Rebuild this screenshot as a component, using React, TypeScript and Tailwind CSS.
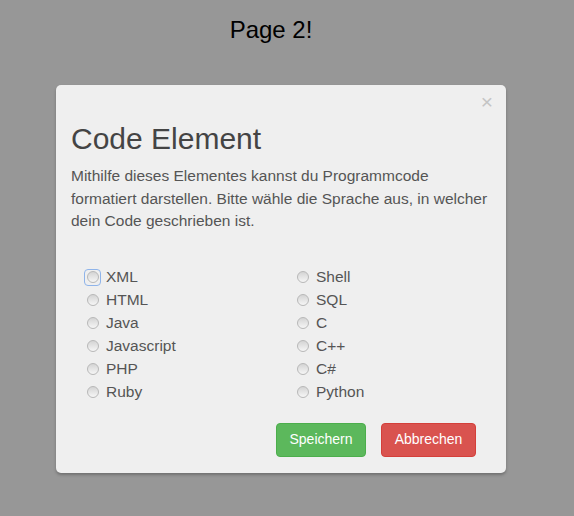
const languages = [
  ['XML', 'Shell'],
  ['HTML', 'SQL'],
  ['Java', 'C'],
  ['Javascript', 'C++'],
  ['PHP', 'C#'],
  ['Ruby', 'Python'],
]

function Radio({ label, focused }: { label: string; focused?: boolean }) {
  return (
    <label className="flex h-[23px] items-center">
      <span
        className={
          focused
            ? 'flex h-[15px] w-[15px] items-center justify-center rounded-[3px] outline outline-[1.5px] outline-[#8fb4ea]'
            : 'flex h-[15px] w-[15px] items-center justify-center'
        }
      >
        <span className="h-[12px] w-[12px] rounded-full border border-[#b8b8b8] bg-gradient-to-b from-[#d4d4d4] to-[#f6f6f6]" />
      </span>
      <span className="ml-[6px] text-[15.5px] text-[#555]">{label}</span>
    </label>
  )
}

export default function App() {
  return (
    <div className="h-[516px] w-[574px] bg-[#979797] font-['Liberation_Sans',Arial,sans-serif]">
      <div className="flex h-[85px] justify-center pr-[32px] pt-[16px]">
        <h2 className="text-[24px] leading-[28px] text-black">Page 2!</h2>
      </div>

      {/* Modal */}
      <div className="relative ml-[56px] h-[388px] w-[450px] rounded-[5px] bg-[#efefef] px-[15px] pt-[37px] shadow-[0_2px_3px_rgba(0,0,0,0.25)]">
        <button className="absolute right-[13px] top-[2px] text-[21px] leading-[30px] text-[#c4c4c4]">
          ×
        </button>
        <h1 className="text-[30px] leading-[33px] text-[#444]">Code Element</h1>
        <p className="mt-[10px] text-[15.5px] leading-[22.5px] text-[#555]">
          Mithilfe dieses Elementes kannst du Programmcode formatiert darstellen. Bitte wähle die Sprache aus, in welcher dein Code geschrieben ist.
        </p>

        <div className="mt-[33px] pl-[14px]">
          {languages.map(([left, right], i) => (
            <div key={left} className="grid grid-cols-[210px_1fr]">
              <Radio label={left} focused={i === 0} />
              <Radio label={right} />
            </div>
          ))}
        </div>

        <div className="mt-[19px] flex justify-end gap-[15px] pr-[15px]">
          <button className="h-[34px] w-[90px] rounded-[4px] border border-[#4cae4c] bg-[#5cb85c] text-[14px] text-white">
            Speichern
          </button>
          <button className="h-[34px] w-[95px] rounded-[4px] border border-[#d43f3a] bg-[#d9534f] text-[14px] text-white">
            Abbrechen
          </button>
        </div>
      </div>
    </div>
  )
}
